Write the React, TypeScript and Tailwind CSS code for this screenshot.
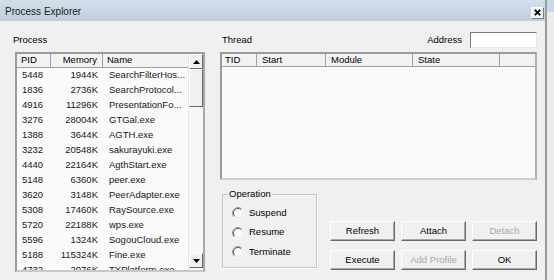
import React from 'react'

const processes = [
    ['5448', '1944K', 'SearchFilterHos...'],
    ['1836', '2736K', 'SearchProtocol...'],
    ['4916', '11296K', 'PresentationFo...'],
    ['3276', '28004K', 'GTGal.exe'],
    ['1388', '3644K', 'AGTH.exe'],
    ['3232', '20548K', 'sakurayuki.exe'],
    ['4440', '22164K', 'AgthStart.exe'],
    ['5148', '6360K', 'peer.exe'],
    ['3620', '3148K', 'PeerAdapter.exe'],
    ['5308', '17460K', 'RaySource.exe'],
    ['5720', '22188K', 'wps.exe'],
    ['5596', '1324K', 'SogouCloud.exe'],
    ['5188', '115324K', 'Fine.exe'],
    ['4732', '2076K', 'TXPlatform.exe'],
]

function Radio({ label }: { label: string }) {
    return (
        <div className="flex items-center h-[19.5px]">
            <svg width="12" height="12" viewBox="0 0 12 12" className="ml-[5px]">
                <circle cx="6" cy="6" r="5" fill="#ffffff" />
                <path d="M9.9 2.1 A5.5 5.5 0 0 0 2.1 9.9" stroke="#9a9a9a" strokeWidth="1" fill="none" />
                <path d="M9.2 2.8 A4.5 4.5 0 0 0 2.8 9.2" stroke="#5a5a5a" strokeWidth="1" fill="none" />
                <path d="M9.9 2.1 A5.5 5.5 0 0 1 2.1 9.9" stroke="#ffffff" strokeWidth="1" fill="none" />
                <path d="M9.2 2.8 A4.5 4.5 0 0 1 2.8 9.2" stroke="#e0e0e0" strokeWidth="1" fill="none" />
            </svg>
            <span className="ml-[5px]">{label}</span>
        </div>
    )
}

function Button({ label, disabled }: { label: string; disabled?: boolean }) {
    return (
        <div
            className={`h-[20px] w-[65px] flex items-center justify-center bg-[#f0f0f0] border border-t-[#ffffff] border-l-[#ffffff] border-r-[#6a6a6a] border-b-[#6a6a6a] shadow-[inset_-1px_-1px_0_#a8a8a8] ${
                disabled ? 'text-[#a8a8a8]' : 'text-black'
            }`}
        >
            {label}
        </div>
    )
}

function Arrow({ up }: { up?: boolean }) {
    return (
        <div className="h-[15px] w-full flex items-center justify-center bg-[#f0f0f0] border border-t-[#ffffff] border-l-[#ffffff] border-r-[#6a6a6a] border-b-[#6a6a6a]">
            <svg width="7" height="4" viewBox="0 0 7 4">
                {up ? <polygon points="3.5,0 7,4 0,4" fill="#000" /> : <polygon points="0,0 7,0 3.5,4" fill="#000" />}
            </svg>
        </div>
    )
}

export default function App() {
    return (
        <div className="w-[554px] h-[280px] overflow-hidden flex bg-[#e9e9e9] text-[9.5px] text-black font-['Liberation_Sans',Arial,sans-serif]">
            <div className="w-[547px] h-full flex flex-col bg-[#f0f0f0] border-r-2 border-[#9c9c9c]">
                <div className="h-[21px] flex items-center justify-between pl-[5px] pr-[1px] bg-gradient-to-b from-[#d3dfeb] to-[#bfcedd]">
                    <span className="mt-[1px] text-[10px] text-[#1a1a1a]">Process Explorer</span>
                    <div className="mt-[4px] w-[13px] h-[12px] flex items-center justify-center bg-[#f2f2f2] border border-t-[#ffffff] border-l-[#ffffff] border-r-[#7a7a7a] border-b-[#7a7a7a]">
                        <svg width="7" height="7" viewBox="0 0 7 7">
                            <path d="M0.8 0.8 L6.2 6.2 M6.2 0.8 L0.8 6.2" stroke="#000" strokeWidth="1.8" />
                        </svg>
                    </div>
                </div>

                <div className="flex pt-[9px]">
                    {/* process panel */}
                    <div className="ml-[13px] flex flex-col">
                        <div className="h-[20px] flex items-center">Process</div>
                        <div className="mt-[2px] ml-[2px] w-[190px] h-[220px] flex bg-[#fafafa] border-2 border-t-[#9a9a9a] border-l-[#9a9a9a] border-r-[#a8a8a8] border-b-[#c8c8c8] overflow-hidden">
                            <div className="w-[173px] flex flex-col overflow-hidden">
                                <div className="h-[14px] flex shrink-0 bg-[#f2f2f2]">
                                    <div className="w-[34px] pl-[4px] flex items-center border-r border-b border-[#a0a0a0]">PID</div>
                                    <div className="w-[52px] pr-[5px] flex items-center justify-end border-r border-b border-[#a0a0a0]">Memory</div>
                                    <div className="flex-1 pl-[4px] flex items-center border-b border-[#a0a0a0]">Name</div>
                                </div>
                                {processes.map(([pid, mem, name]) => (
                                    <div key={pid} className="h-[15px] flex shrink-0 items-center text-[#202020]">
                                        <div className="w-[34px] pl-[5px]">{pid}</div>
                                        <div className="w-[52px] pr-[5px] text-right">{mem}</div>
                                        <div className="flex-1 pl-[6px] whitespace-nowrap">{name}</div>
                                    </div>
                                ))}
                            </div>
                            <div className="w-[15px] flex flex-col bg-[#f7f7f7] border-l border-[#e4e4e4]">
                                <Arrow up />
                                <div className="h-[38px] bg-[#f0f0f0] border border-t-[#ffffff] border-l-[#ffffff] border-r-[#6a6a6a] border-b-[#6a6a6a]" />
                                <div className="flex-1" />
                                <div className="mb-[2px]">
                                    <Arrow />
                                </div>
                            </div>
                        </div>
                    </div>

                    {/* thread panel */}
                    <div className="ml-[15px] w-[317px] flex flex-col">
                        <div className="h-[20px] flex items-center justify-between">
                            <span className="pl-[2px]">Thread</span>
                            <div className="flex items-center">
                                <span>Address</span>
                                <div className="ml-[8px] w-[67px] h-[16px] bg-white border border-t-[#7a7a7a] border-l-[#7a7a7a] border-r-[#e6e6e6] border-b-[#e6e6e6]" />
                            </div>
                        </div>
                        <div className="mt-[2px] h-[128px] flex flex-col bg-[#fafafa] border-2 border-t-[#9a9a9a] border-l-[#9a9a9a] border-r-[#b0b0b0] border-b-[#d0d0d0]">
                            <div className="h-[13px] flex bg-[#f2f2f2]">
                                <div className="w-[35px] pl-[3px] flex items-center border-r border-b border-[#a0a0a0]">TID</div>
                                <div className="w-[69px] pl-[5px] flex items-center border-r border-b border-[#a0a0a0]">Start</div>
                                <div className="w-[87px] pl-[5px] flex items-center border-r border-b border-[#a0a0a0]">Module</div>
                                <div className="w-[87px] pl-[5px] flex items-center border-r border-b border-[#a0a0a0]">State</div>
                                <div className="flex-1 border-b border-[#a0a0a0]" />
                            </div>
                        </div>

                        <div className="flex items-start">
                            <fieldset className="mt-[7px] ml-[2px] w-[95px] h-[81px] border border-[#c6c6c6] shadow-[1px_1px_0_#ffffff] px-[4px]">
                                <legend className="ml-[1px] px-[1px]">Operation</legend>
                                <div className="pt-[2px] flex flex-col">
                                    <Radio label="Suspend" />
                                    <Radio label="Resume" />
                                    <Radio label="Terminate" />
                                </div>
                            </fieldset>
                            <div className="mt-[41px] ml-[13px] grid grid-cols-3 gap-x-[6px] gap-y-[9px]">
                                <Button label="Refresh" />
                                <Button label="Attach" />
                                <Button label="Detach" disabled />
                                <Button label="Execute" />
                                <Button label="Add Profile" disabled />
                                <Button label="OK" />
                            </div>
                        </div>
                    </div>
                </div>
            </div>
            <div className="flex-1 flex flex-col">
                <div className="h-[12px] bg-[#c9d8ea]" />
                <div className="flex-1 bg-[#ececec]" />
            </div>
        </div>
    )
}
